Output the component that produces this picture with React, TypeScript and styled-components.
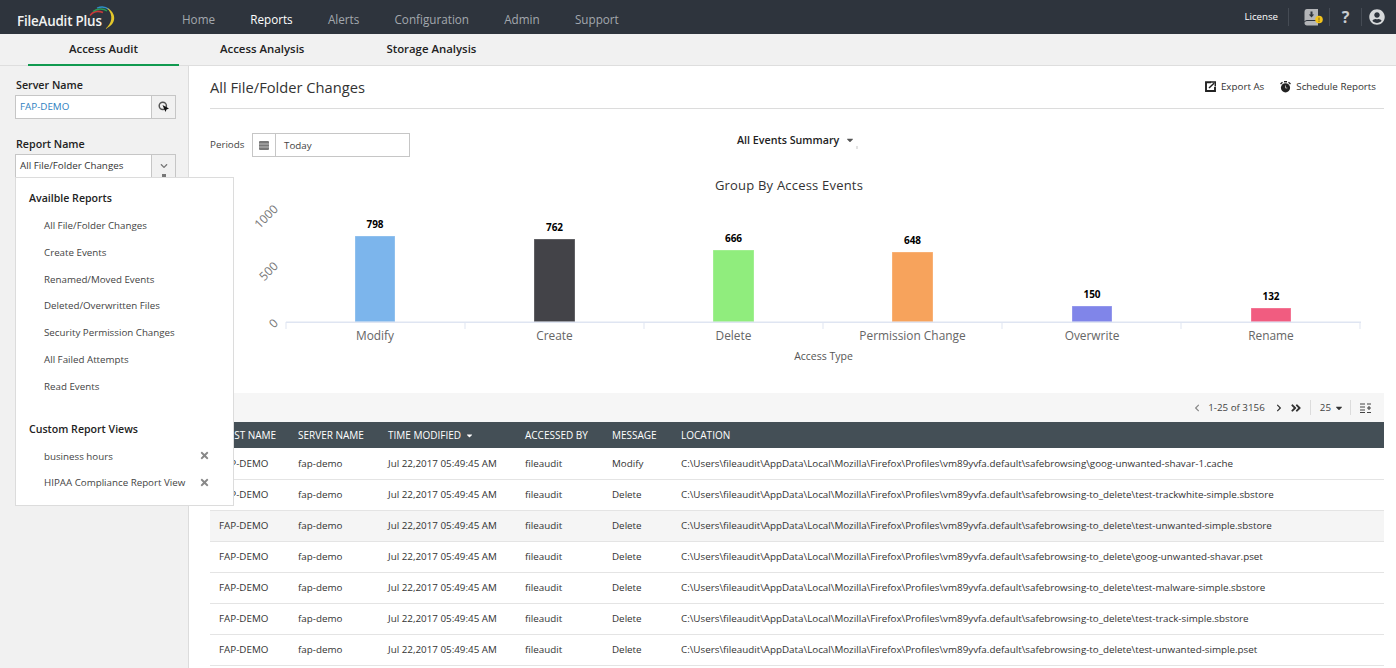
import React from "react";
import styled, { createGlobalStyle } from "styled-components";
import { FaUserCircle, FaChevronRight, FaChevronLeft, FaAngleDoubleRight, FaCaretDown, FaTimes, FaChevronDown } from "react-icons/fa";

const Global = createGlobalStyle`
  html, body { margin: 0; padding: 0; height: 668px; overflow: hidden; background: #fff; }
  body { font-family: "Open Sans", "Liberation Sans", sans-serif; color: #333; }
  * { box-sizing: border-box; }
`;
const Page = styled.div`width: 1396px; height: 668px; position: relative; overflow: hidden; display: flex; flex-direction: column;`;
const TopBar = styled.header`height: 34px; background: #2e343d; display: flex; align-items: center; flex: none;`;
const Brand = styled.div`width: 182px; padding-left: 17px; display: flex; align-items: center; color: #fff; font-size: 13.4px; font-weight: 600; letter-spacing: -0.2px; height: 100%;`;
const BrandText = styled.span`margin-top: 8px; width: 71px; white-space: nowrap; color: #f2f2f2;`;
const Logo = styled.svg`flex: none;`;
const Nav = styled.nav`display: flex; gap: 35.2px; flex: 1; padding-top: 3px;`;
const NavItem = styled.a<{ $active?: boolean }>`font-size: 11.7px; color: ${(p) => (p.$active ? "#fff" : "#a3a8ae")};`;
const TopRight = styled.div`display: flex; align-items: center; padding-right: 5px; color: #fff;`;
const License = styled.span`font-size: 9.7px; color: #fff; margin-right: 10px; margin-top: -2px;`;
const TopCell = styled.div<{ $w: number }>`width: ${(p) => p.$w}px; height: 18px; border-left: 1px solid #454b54; display: flex; align-items: center; justify-content: center; color: #c9ccd0; font-size: 16px; font-weight: 700;`;
const BookIcon = styled.svg`margin-left: 9px;`;

const Tabs = styled.div`height: 32px; background: #f1f1f1; border-bottom: 1px solid #dedede; display: flex; padding-left: 28px; flex: none;`;
const Tab = styled.div<{ $active?: boolean }>`padding: 0 41px; height: 32px; line-height: 29px; font-size: 11.4px; font-weight: 600; color: #222; border-bottom: 2px solid ${(p) => (p.$active ? "#119a50" : "transparent")};`;

const Body = styled.div`flex: 1; display: flex; min-height: 0;`;
const Side = styled.aside`width: 189px; flex: none; background: #f1f1f1; border-right: 1px solid #dcdcdc; padding: 12px 12px 0 15px;`;
const FieldLabel = styled.div`font-size: 10.7px; font-weight: 600; color: #222; line-height: 14px; margin-left: 1px; margin-bottom: 3px;`;
const Field = styled.div`height: 24px; width: 161px; display: flex; background: #fff; border: 1px solid #c6c6c6; margin-bottom: 18px; font-size: 9.8px; align-items: center;`;
const FieldValue = styled.span<{ $blue?: boolean }>`flex: 1; padding: 0 0 2px 4px; color: ${(p) => (p.$blue ? "#2f7fc1" : "#333")};`;
const FieldButton = styled.span`width: 24px; height: 22px; background: #f1f1f1; border-left: 1px solid #c6c6c6; display: flex; align-items: center; justify-content: center; color: #666;`;

const Main = styled.main`flex: 1; min-width: 0; padding: 0 12px 0 21px; display: flex; flex-direction: column;`;
const TitleRow = styled.div`height: 43px; padding-bottom: 1px; border-bottom: 1px solid #dcdcdc; display: flex; align-items: center; flex: none;`;
const Title = styled.h1`margin: 0; flex: 1; font-size: 14.7px; font-weight: 400; color: #333;`;
const Action = styled.span`display: flex; align-items: center; gap: 5px; font-size: 9.8px; color: #333; margin-left: 16px; &:last-child { margin-right: 8px; }`;
const FilterRow = styled.div`display: flex; align-items: flex-start; margin-top: 24px; height: 24px; flex: none;`;
const PeriodLabel = styled.span`font-size: 9.8px; color: #444; width: 42px; line-height: 24px;`;
const PeriodBox = styled.div`width: 158px; height: 24px; border: 1px solid #c6c6c6; display: flex; align-items: center; font-size: 9.8px; color: #444;`;
const PeriodIcon = styled.span`width: 23px; height: 22px; border-right: 1px solid #c6c6c6; display: flex; align-items: center; justify-content: center;`;
const PeriodValue = styled.span`padding-left: 8px;`;
const Summary = styled.div`margin-left: 327px; margin-top: -1px; font-size: 10.7px; font-weight: 600; color: #222; display: flex; align-items: center; gap: 6px; line-height: 16px; position: relative;
  &::after { content: ""; position: absolute; right: -3px; top: 14px; width: 2px; height: 3px; background: #e2e2e2; }`;
const Chart = styled.svg`display: block; margin-top: 18px; flex: none; font-family: "Open Sans", "Liberation Sans", sans-serif;`;

const Pager = styled.div`height: 29px; background: #f6f6f6; display: flex; align-items: center; justify-content: flex-end; font-size: 9.8px; color: #444; padding-right: 13px; flex: none;`;
const PagerBtn = styled.span<{ $m?: string }>`display: inline-flex; align-items: center; margin: ${(p) => p.$m || "0"};`;
const PagerSep = styled.span<{ $m?: string }>`width: 1px; height: 15px; background: #dcdcdc; margin: ${(p) => p.$m || "0 9px"};`;

const Table = styled.table`width: 1174px; border-collapse: collapse; table-layout: fixed; flex: none;`;
const Th = styled.th`background: #444f56; color: #fff; height: 26px; font-size: 10px; font-weight: 400; text-align: left; padding: 0 0 0 9px; white-space: nowrap;`;
const Tr = styled.tr<{ $shade?: boolean }>`background: ${(p) => (p.$shade ? "#f5f5f5" : "#fff")};`;
const Td = styled.td`height: 31px; font-size: 9.82px; color: #333; padding: 0 0 0 9px; border-bottom: 1px solid #e4e4e4; white-space: nowrap; overflow: hidden;`;

const Menu = styled.div`position: absolute; left: 15px; top: 177px; width: 219px; height: 329px; background: #fff; border: 1px solid #dcdcdc; padding: 13px 0 0 13px;`;
const MenuHead = styled.div`font-size: 10.6px; font-weight: 600; color: #222; line-height: 15px; margin-bottom: 7px;`;
const MenuItem = styled.div`font-size: 9.75px; color: #444; height: 26.8px; line-height: 26.8px; padding-left: 15px; display: flex; align-items: center; justify-content: space-between; padding-right: 23px;`;
const MenuSpacer = styled.div`height: 21px;`;
const MenuClose = styled.span`display: flex; color: #888; margin-top: -3px;`;
const Peek = styled.span`position: absolute; left: 162px; top: 174px; width: 4px; height: 3px; background: #777;`;

const bars = [
  { name: "Modify", v: 798, x: 355, w: 40, top: 236, c: "#7cb5ec" },
  { name: "Create", v: 762, x: 534, w: 41, top: 239, c: "#434348" },
  { name: "Delete", v: 666, x: 713, w: 41, top: 250, c: "#90ed7d" },
  { name: "Permission Change", v: 648, x: 892, w: 41, top: 252, c: "#f7a35c" },
  { name: "Overwrite", v: 150, x: 1072, w: 40, top: 306, c: "#8085e9" },
  { name: "Rename", v: 132, x: 1251, w: 40, top: 308, c: "#f15c80" },
];
const ticks = [286, 465, 644, 823, 1002, 1181, 1360];
const paths = [
  "safebrowsing\\goog-unwanted-shavar-1.cache",
  "safebrowsing-to_delete\\test-trackwhite-simple.sbstore",
  "safebrowsing-to_delete\\test-unwanted-simple.sbstore",
  "safebrowsing-to_delete\\goog-unwanted-shavar.pset",
  "safebrowsing-to_delete\\test-malware-simple.sbstore",
  "safebrowsing-to_delete\\test-track-simple.sbstore",
  "safebrowsing-to_delete\\test-unwanted-simple.pset",
];
const reports = ["All File/Folder Changes", "Create Events", "Renamed/Moved Events", "Deleted/Overwritten Files", "Security Permission Changes", "All Failed Attempts", "Read Events"];

export default function App() {
  return (
    <Page>
      <Global />
      <TopBar>
        <Brand>
          <BrandText>FileAudit Plus</BrandText>
          <Logo width="30" height="30" viewBox="88 2 30 30" fill="none">
            <path d="M90 15.5 C93 11.5 98 10.5 103 12.5" stroke="#c63a3a" strokeWidth="1.5" />
            <path d="M93 11.5 C97 8.5 103 8 107 11" stroke="#2a9a55" strokeWidth="1.5" />
            <path d="M97 8 C101 6.5 106 7 109 9.5" stroke="#2e8fc8" strokeWidth="1.3" />
            <path d="M107 8 C116 12 118 24 105 29 C112 24 114 15 107 8 Z" fill="#e3c62b" />
          </Logo>
        </Brand>
        <Nav>
          <NavItem>Home</NavItem>
          <NavItem $active>Reports</NavItem>
          <NavItem>Alerts</NavItem>
          <NavItem>Configuration</NavItem>
          <NavItem>Admin</NavItem>
          <NavItem>Support</NavItem>
        </Nav>
        <TopRight>
          <License>License</License>
          <TopCell $w={41}>
            <BookIcon width="19" height="17" viewBox="0 0 19 17">
              <path d="M3 0 H14 V11 H3 C1.5 11 0.5 12 0.5 13 V3 C0.5 1 1.5 0 3 0 Z M0.5 14 C0.5 13 1.5 12 3 12 H14 V16.5 H3 C1.5 16.5 0.5 15.5 0.5 14 Z" fill="#b3b5b8" />
              <path d="M6.5 2.5 h2 v3 h1.7 l-2.7 3 l-2.7 -3 h1.7 z" fill="#2e343d" />
              <circle cx="15" cy="10.5" r="3.8" fill="#f2c31c" />
              <rect x="14.5" y="8.5" width="1" height="3" fill="#7a6410" />
              <rect x="14.5" y="12" width="1" height="0.9" fill="#7a6410" />
            </BookIcon>
          </TopCell>
          <TopCell $w={32}>?</TopCell>
          <TopCell $w={30}><FaUserCircle size={16} color="#d6d8da" /></TopCell>
        </TopRight>
      </TopBar>
      <Tabs>
        <Tab $active>Access Audit</Tab>
        <Tab>Access Analysis</Tab>
        <Tab>Storage Analysis</Tab>
      </Tabs>
      <Body>
        <Side>
          <FieldLabel>Server Name</FieldLabel>
          <Field>
            <FieldValue $blue>FAP-DEMO</FieldValue>
            <FieldButton>
              <svg width="12" height="12" viewBox="0 0 12 12">
                <circle cx="4.8" cy="4.8" r="3.6" fill="none" stroke="#555" strokeWidth="1.5" />
                <path d="M4.5 4 L11 7.5 L8.5 8.5 L7.5 11 Z" fill="#111" />
              </svg>
            </FieldButton>
          </Field>
          <FieldLabel>Report Name</FieldLabel>
          <Field>
            <FieldValue>All File/Folder Changes</FieldValue>
            <FieldButton><FaChevronDown size={8} color="#777" /></FieldButton>
          </Field>
        </Side>
        <Main>
          <TitleRow>
            <Title>All File/Folder Changes</Title>
            <Action>
              <svg width="11" height="11" viewBox="0 0 11 11" fill="none">
                <path d="M6 1.2 H1 V10 H10 V6" stroke="#222" strokeWidth="1.9" />
                <path d="M4 7 L9 2.2 M5.5 1 H10.3 V5.5" stroke="#222" strokeWidth="1.5" />
              </svg>
              Export As
            </Action>
            <Action>
              <svg width="11" height="12" viewBox="0 0 11 12">
                <circle cx="5.5" cy="6.8" r="4.6" fill="#222" />
                <rect x="4" y="0" width="3" height="1.4" fill="#222" />
                <path d="M0.5 3 L2.5 1.2 M10.5 3 L8.5 1.2" stroke="#222" strokeWidth="1.3" />
                <path d="M5.5 4.5 V7 H7.3" stroke="#ccc" strokeWidth="0.8" fill="none" />
              </svg>
              Schedule Reports
            </Action>
          </TitleRow>
          <FilterRow>
            <PeriodLabel>Periods</PeriodLabel>
            <PeriodBox>
              <PeriodIcon>
                <svg width="10" height="9" viewBox="0 0 10 9">
                  <rect width="10" height="9" rx="1" fill="#777" />
                  <path d="M0 3 H10 M0 6 H10" stroke="#ddd" strokeWidth="0.7" />
                </svg>
              </PeriodIcon>
              <PeriodValue>Today</PeriodValue>
            </PeriodBox>
            <Summary>All Events Summary <FaCaretDown size={10} color="#555" /></Summary>
          </FilterRow>
          <Chart width="1174" height="218" viewBox="210 175 1174 218">
            <text x="789" y="190" textAnchor="middle" fontSize="13" letterSpacing="0.2" fill="#333">Group By Access Events</text>
            {[["1000", 207], ["500", 264], ["0", 321]].map(([l, y]) => (
              <text key={l} x="276" y={Number(y) + 4} textAnchor="end" fontSize="12" fill="#777" transform={`rotate(-45 276 ${y})`}>{l}</text>
            ))}
            {bars.map((b) => (
              <g key={b.name}>
                <rect x={b.x} y={b.top} width={b.w} height={322 - b.top} fill={b.c} stroke="#fff" strokeOpacity="0.3" />
                <text x={b.x + b.w / 2} y={b.top - 8} textAnchor="middle" fontSize="10" fontWeight="700" fill="#000">{b.v}</text>
                <text x={b.x + b.w / 2} y={340} textAnchor="middle" fontSize="11.9" fill="#666">{b.name}</text>
              </g>
            ))}
            <rect x="286" y="321.5" width="1075" height="1.5" fill="#dfe5f2" />
            {ticks.map((t) => <rect key={t} x={t - 0.5} y="322" width="1" height="7" fill="#dfe5f2" />)}
            <text x="823.5" y="360" textAnchor="middle" fontSize="10.5" fill="#555">Access Type</text>
          </Chart>
          <Pager>
            <PagerBtn $m="0 7px 0 0"><FaChevronLeft size={8} color="#888" /></PagerBtn>
            1-25 of 3156
            <PagerBtn $m="0 7px 0 10px"><FaChevronRight size={8} color="#333" /></PagerBtn>
            <PagerBtn><FaAngleDoubleRight size={12} color="#333" /></PagerBtn>
            <PagerSep $m="0 9px 0 8px" />
            25
            <PagerBtn $m="0 0 0 3px"><FaCaretDown size={10} color="#333" /></PagerBtn>
            <PagerSep $m="0 9px 0 6px" />
            <svg width="11" height="10" viewBox="0 0 11 10">
              <path d="M0 1 H5 M0 4 H5 M0 7 H5 M0 9.5 H5 M7 1 H11 M7 9.5 H11 M7 5 H11 M9 3 V7" stroke="#444" strokeWidth="1.1" />
            </svg>
          </Pager>
          <Table>
            <colgroup>
              <col width="79" /><col width="90" /><col width="137" /><col width="87" /><col width="69" /><col />
            </colgroup>
            <thead>
              <tr>
                <Th>HOST NAME</Th><Th>SERVER NAME</Th>
                <Th>TIME MODIFIED <FaCaretDown size={9} style={{ marginLeft: 1, verticalAlign: -1 }} /></Th>
                <Th>ACCESSED BY</Th><Th>MESSAGE</Th><Th>LOCATION</Th>
              </tr>
            </thead>
            <tbody>
              {paths.map((p, i) => (
                <Tr key={i} $shade={i === 2}>
                  <Td>FAP-DEMO</Td>
                  <Td>fap-demo</Td>
                  <Td>Jul 22,2017 05:49:45 AM</Td>
                  <Td>fileaudit</Td>
                  <Td>{i === 0 ? "Modify" : "Delete"}</Td>
                  <Td>{"C:\\Users\\fileaudit\\AppData\\Local\\Mozilla\\Firefox\\Profiles\\vm89yvfa.default\\" + p}</Td>
                </Tr>
              ))}
            </tbody>
          </Table>
        </Main>
      </Body>
      <Peek />
      <Menu>
        <MenuHead>Availble Reports</MenuHead>
        {reports.map((r) => <MenuItem key={r}>{r}</MenuItem>)}
        <MenuSpacer />
        <MenuHead>Custom Report Views</MenuHead>
        <MenuItem>business hours<MenuClose><FaTimes size={11} /></MenuClose></MenuItem>
        <MenuItem>HIPAA Compliance Report View<MenuClose><FaTimes size={11} /></MenuClose></MenuItem>
      </Menu>
    </Page>
  );
}
